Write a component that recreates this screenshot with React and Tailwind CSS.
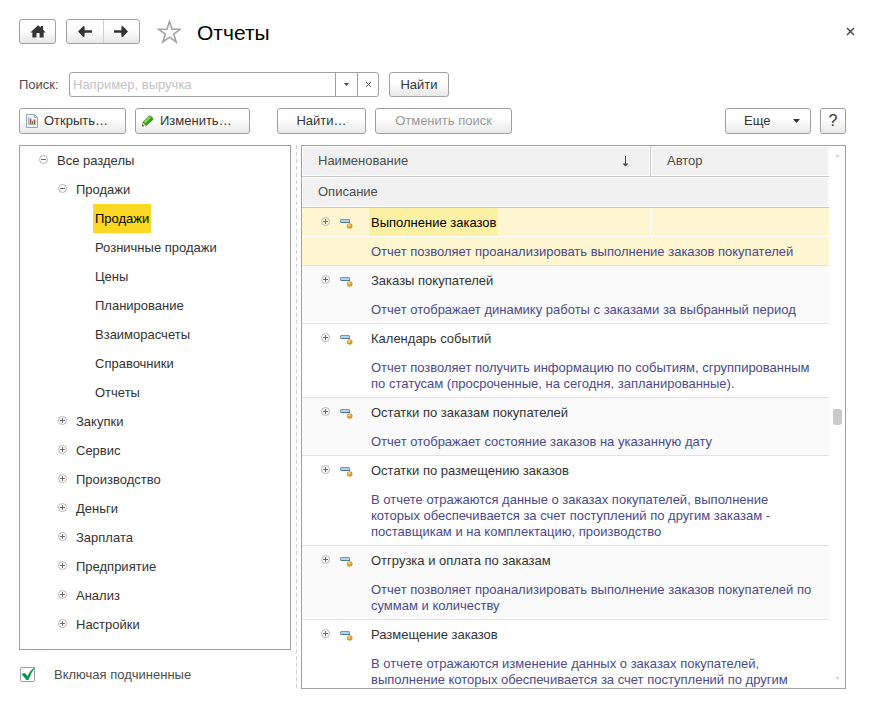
import React from 'react';

const sections = [
  { level: 0, label: 'Все разделы', state: 'open' },
  { level: 1, label: 'Продажи', state: 'open' },
  { level: 2, label: 'Продажи', selected: true },
  { level: 2, label: 'Розничные продажи' },
  { level: 2, label: 'Цены' },
  { level: 2, label: 'Планирование' },
  { level: 2, label: 'Взаиморасчеты' },
  { level: 2, label: 'Справочники' },
  { level: 2, label: 'Отчеты' },
  { level: 1, label: 'Закупки', state: 'closed' },
  { level: 1, label: 'Сервис', state: 'closed' },
  { level: 1, label: 'Производство', state: 'closed' },
  { level: 1, label: 'Деньги', state: 'closed' },
  { level: 1, label: 'Зарплата', state: 'closed' },
  { level: 1, label: 'Предприятие', state: 'closed' },
  { level: 1, label: 'Анализ', state: 'closed' },
  { level: 1, label: 'Настройки', state: 'closed' },
];

const reports = [
  { name: 'Выполнение заказов', text: 'Отчет позволяет проанализировать выполнение заказов покупателей', selected: true },
  { name: 'Заказы покупателей', text: 'Отчет отображает динамику работы с заказами за выбранный период' },
  { name: 'Календарь событий', text: 'Отчет позволяет получить информацию по событиям, сгруппированным по статусам (просроченные, на сегодня, запланированные).' },
  { name: 'Остатки по заказам покупателей', text: 'Отчет отображает состояние заказов на указанную дату' },
  { name: 'Остатки по размещению заказов', text: 'В отчете отражаются данные о заказах покупателей, выполнение которых обеспечивается за счет поступлений по другим заказам - поставщикам и на комплектацию, производство' },
  { name: 'Отгрузка и оплата по заказам', text: 'Отчет позволяет проанализировать выполнение заказов покупателей по суммам и количеству' },
  { name: 'Размещение заказов', text: 'В отчете отражаются изменение данных о заказах покупателей, выполнение которых обеспечивается за счет поступлений по другим' },
];

const indents = ['pl-[19px]', 'pl-[38px]', 'pl-[73px]'];

const buttonLook =
  'flex shrink-0 items-center rounded-[3px] border border-[#a0a0a0] bg-linear-to-b from-white from-40% to-[#e8e8e8] text-[#333]';

function Button({ className = '', children, ...rest }) {
  return (
    <button type="button" className={`${buttonLook} ${className}`} {...rest}>
      {children}
    </button>
  );
}

function Toggle({ open }) {
  return (
    <svg className="block size-[9px]" viewBox="0 0 9 9" fill="none">
      <circle cx="4.5" cy="4.5" r="4" stroke="#b4b4b4" />
      <path d={open ? 'M2 4.5h5' : 'M2 4.5h5M4.5 2v5'} stroke="#6a6a6a" />
    </svg>
  );
}

function Arrow({ className = '' }) {
  return (
    <svg className={`block h-[11px] w-[14px] ${className}`} viewBox="0 0 14 11">
      <path d="M0 5.5 5 0.3H6.6V4.3H14V6.7H6.6V10.7H5Z" fill="#333" />
    </svg>
  );
}

function ReportIcon() {
  return (
    <svg className="block h-[10px] w-[13px]" viewBox="0 0 13 10">
      <rect x="0.5" y="0.5" width="9" height="3" rx="0.5" fill="#b4d3e9" stroke="#7396b0" />
      <path d="M1 3.5h9" stroke="#4c7595" />
      <circle cx="9.7" cy="7" r="2.8" fill="#d79a2b" />
      <circle cx="9.2" cy="6.3" r="1.3" fill="#f5cf70" />
    </svg>
  );
}

function Header() {
  return (
    <header className="flex h-[25px] items-center">
      <Button className="h-[25px] w-[37px] justify-center" aria-label="Домой">
        <svg className="block h-[13px] w-[16px]" viewBox="0 0 16 13" fill="#333">
          <path d="M8 0.2 10.8 2.6V1H13V4.6L15.6 7.4H13.6V12.5H9.6V8H6.4V12.5H2.4V7.4H0.4Z" />
        </svg>
      </Button>
      <div className={`${buttonLook} ml-2.5 h-[25px] w-[74px]`}>
        <button type="button" className="flex h-full flex-1 items-center justify-center border-r border-[#d0d0d0]" aria-label="Назад">
          <Arrow />
        </button>
        <button type="button" className="flex h-full flex-1 items-center justify-center" aria-label="Вперед">
          <Arrow className="rotate-180" />
        </button>
      </div>
      <button type="button" className="ml-[17px] shrink-0" aria-label="В избранное">
        <svg className="block size-6" viewBox="0 0 24 24" fill="none">
          <path d="M12.5 1.5 15.1 9.3H23.2L16.7 14 19.2 22 12.5 17.2 5.8 22 8.3 14 1.8 9.3H9.9Z" stroke="#a3a3a3" strokeWidth="1.6" />
        </svg>
      </button>
      <h1 className="ml-4 pt-0.5 text-[21px] leading-[25px] text-black">Отчеты</h1>
      <button type="button" className="-mr-2.5 ml-auto p-px" aria-label="Закрыть">
        <svg className="block size-[9px]" viewBox="0 0 9 9">
          <path d="M1 1 8 8M8 1 1 8" stroke="#444" strokeWidth="1.4" />
        </svg>
      </button>
    </header>
  );
}

function Search() {
  return (
    <form className="mt-7 flex h-[25px] items-center" onSubmit={(e) => e.preventDefault()}>
      <label htmlFor="search" className="w-[50px] shrink-0 text-[#4d4d4d]">Поиск:</label>
      <div className="flex h-full w-[310px] overflow-hidden rounded-[3px] border border-[#a0a0a0]">
        <input
          id="search"
          type="text"
          placeholder="Например, выручка"
          className="min-w-0 flex-1 px-[3px] outline-none placeholder:text-[#c3c3c3]"
        />
        <button type="button" className="flex w-[22px] items-center justify-center border-l border-[#a0a0a0]" aria-label="Показать список">
          <svg className="block h-[3px] w-[5px]" viewBox="0 0 5 3"><path d="M0 0H5L2.5 3Z" fill="#444" /></svg>
        </button>
        <button type="button" className="flex w-[21px] items-center justify-center border-l border-[#a0a0a0]" aria-label="Очистить">
          <svg className="block size-[5px]" viewBox="0 0 5 5"><path d="M0 0 5 5M5 0 0 5" stroke="#555" /></svg>
        </button>
      </div>
      <Button className="ml-2.5 h-[25px] w-[60px] justify-center">Найти</Button>
    </form>
  );
}

function Toolbar() {
  return (
    <div className="mt-[11px] flex items-center">
      <Button className="h-[26px] w-[107px] gap-1.5 px-1.5">
        <svg className="block h-[14px] w-3 shrink-0" viewBox="0 0 12 14" fill="none">
          <path d="M0.5 0.5H8.5L11.5 3.5V13.5H0.5Z" fill="#eef5fa" stroke="#8faabe" />
          <path d="M8.5 0.5V3.5H11.5" stroke="#8faabe" />
          <path d="M2.5 3V10.5H10" stroke="#a5b5c1" />
          <path d="M4.5 4.5V10M8.5 5.5V10" stroke="#dd3b32" strokeWidth="1.6" />
          <path d="M6.5 7V10" stroke="#3f9b46" strokeWidth="1.4" />
        </svg>
        Открыть…
      </Button>
      <Button className="ml-[9px] h-[26px] w-[115px] gap-1.5 px-[5px]">
        <svg className="block h-3 w-[13px] shrink-0" viewBox="0 0 13 12">
          <path d="M1 11.5 1.6 7 8 0.8Q9 0 10 1L12 3Q12.8 4 12 5L5.5 10.8Z" fill="#3d9a1c" />
          <path d="M2.8 6.7 8.6 1.3 10 2.7 4.2 8.2Z" fill="#8fd95a" />
          <path d="M1 11.5 1.6 7.4 5 10.8Z" fill="#e8dcae" />
          <path d="M1 11.5 1.3 9.3 3 11Z" fill="#333" />
        </svg>
        Изменить…
      </Button>
      <Button className="ml-[27px] h-[26px] w-[89px] justify-center">Найти…</Button>
      <button type="button" disabled className={`${buttonLook} ml-[9px] h-[26px] w-[137px] justify-center`}>
        <span className="text-[#999]">Отменить поиск</span>
      </button>
      <Button className="ml-auto h-[26px] w-[86px] justify-between pr-2.5 pl-[18px]">
        Еще
        <svg className="block h-1 w-[7px]" viewBox="0 0 7 4"><path d="M0 0H7L3.5 4Z" fill="#333" /></svg>
      </Button>
      <Button className="ml-[9px] h-[26px] w-[26px] justify-center text-[16px]">?</Button>
    </div>
  );
}

function SectionTree() {
  return (
    <ul className="min-h-0 flex-1 overflow-hidden border border-[#a0a0a0]">
      {sections.map((s, i) => (
        <li key={i} className={`flex h-[29px] items-center ${indents[s.level]}`}>
          {s.state && (
            <button type="button" className="mr-[7px] pb-0.5" aria-label={s.state === 'open' ? 'Свернуть' : 'Развернуть'}>
              <Toggle open={s.state === 'open'} />
            </button>
          )}
          <button
            type="button"
            className={`h-full px-0.5 ${s.selected ? 'bg-[#fbd922] text-black' : ''}`}
          >
            {s.label}
          </button>
        </li>
      ))}
    </ul>
  );
}

function ReportList() {
  return (
    <div className="flex min-w-0 flex-1 border border-[#a0a0a0]">
      <div className="min-w-0 flex-1 overflow-hidden">
        <table className="w-full table-fixed border-separate border-spacing-0 text-left">
          <colgroup>
            <col />
            <col className="w-[178px]" />
          </colgroup>
          <thead className="text-[#4d4d4d]">
            <tr>
              <th className="h-[31px] border-r border-b border-[#c6c6c6] bg-[#f1f1f1] p-0 font-normal inset-ring inset-ring-white">
                <div className="flex items-center justify-between pr-[21px] pl-4">
                  Наименование
                  <svg className="block h-[11px] w-[7px]" viewBox="0 0 7 11">
                    <path d="M3 0H4V7.5H6.5L3.5 10.5 0.5 7.5H3Z" fill="#444" />
                  </svg>
                </div>
              </th>
              <th className="h-[31px] border-b border-[#c6c6c6] bg-[#f1f1f1] p-0 pl-4 font-normal inset-ring inset-ring-white">Автор</th>
            </tr>
            <tr>
              <th colSpan={2} className="h-[31px] border-b border-[#c6c6c6] bg-[#f1f1f1] p-0 pl-4 font-normal inset-ring inset-ring-white">Описание</th>
            </tr>
          </thead>
          {reports.map((r, i) => {
            const fill = r.selected ? 'bg-[#fdf6d0]' : i % 2 ? 'bg-[#fafafa]' : 'bg-white';
            const line = r.selected ? 'border-white' : 'border-transparent';
            return (
              <tbody key={r.name} className={fill}>
                <tr>
                  <td className={`h-[29px] border-r border-b p-0 ${line}`}>
                    <div className="flex h-7 items-center pl-[19px]">
                      <button type="button" className="pb-0.5" aria-label="Развернуть">
                        <Toggle />
                      </button>
                      <span className="ml-2.5 pt-1"><ReportIcon /></span>
                      <span className={`ml-4 flex h-full items-center px-0.5 pt-0.5 ${r.selected ? 'bg-[#fcf0a2] text-black' : ''}`}>
                        {r.name}
                      </span>
                    </div>
                  </td>
                  <td className={`border-b p-0 ${line}`} />
                </tr>
                <tr>
                  <td colSpan={2} className="border-b border-[#e2e2e2] pt-[7px] pr-4 pb-[5px] pl-[69px] leading-4 text-[#4a4a8c]">
                    {r.text}
                  </td>
                </tr>
              </tbody>
            );
          })}
        </table>
      </div>
      <div className="flex w-4 shrink-0 flex-col items-center py-2">
        <svg className="block h-[3px] w-[5px]" viewBox="0 0 5 3"><path d="M0 3H5L2.5 0Z" fill="#d8d8d8" /></svg>
        <div className="flex-1" />
        <div className="h-4 w-[9px] rounded-[3px] bg-[#cacaca]" />
        <div className="flex-1" />
        <svg className="block h-[3px] w-[5px]" viewBox="0 0 5 3"><path d="M0 0H5L2.5 3Z" fill="#d8d8d8" /></svg>
      </div>
    </div>
  );
}

export default function App() {
  return (
    <main className="flex h-screen flex-col bg-white pt-[19px] pr-[26px] pb-[14px] pl-[19px] font-['Liberation_Sans',Arial,sans-serif] text-[13px] leading-4 text-[#333]">
      <Header />
      <Search />
      <Toolbar />
      <div className="mt-[11px] flex min-h-0 flex-1">
        <div className="flex w-[272px] shrink-0 flex-col">
          <SectionTree />
          <label className="flex h-[39px] items-center pt-2.5 text-[#4d4d4d]">
            <span className="relative ml-px block size-[15px]">
              <input type="checkbox" defaultChecked className="block size-[15px] appearance-none rounded-[2px] border border-[#a0a0a0]" />
              <svg className="pointer-events-none absolute -top-px left-0 h-4 w-4" viewBox="0 0 16 16">
                <path d="M1.5 8 5 7 7.4 10Q10.5 4 15.8 0Q11 7 8.4 14H6.5Z" fill="#009a4d" />
              </svg>
            </span>
            <span className="ml-[19px]">Включая подчиненные</span>
          </label>
        </div>
        <div className="ml-[5px] mr-1 w-px shrink-0 bg-[repeating-linear-gradient(#d0d0d0_0_4px,transparent_4px_7px)]" />
        <ReportList />
      </div>
    </main>
  );
}
